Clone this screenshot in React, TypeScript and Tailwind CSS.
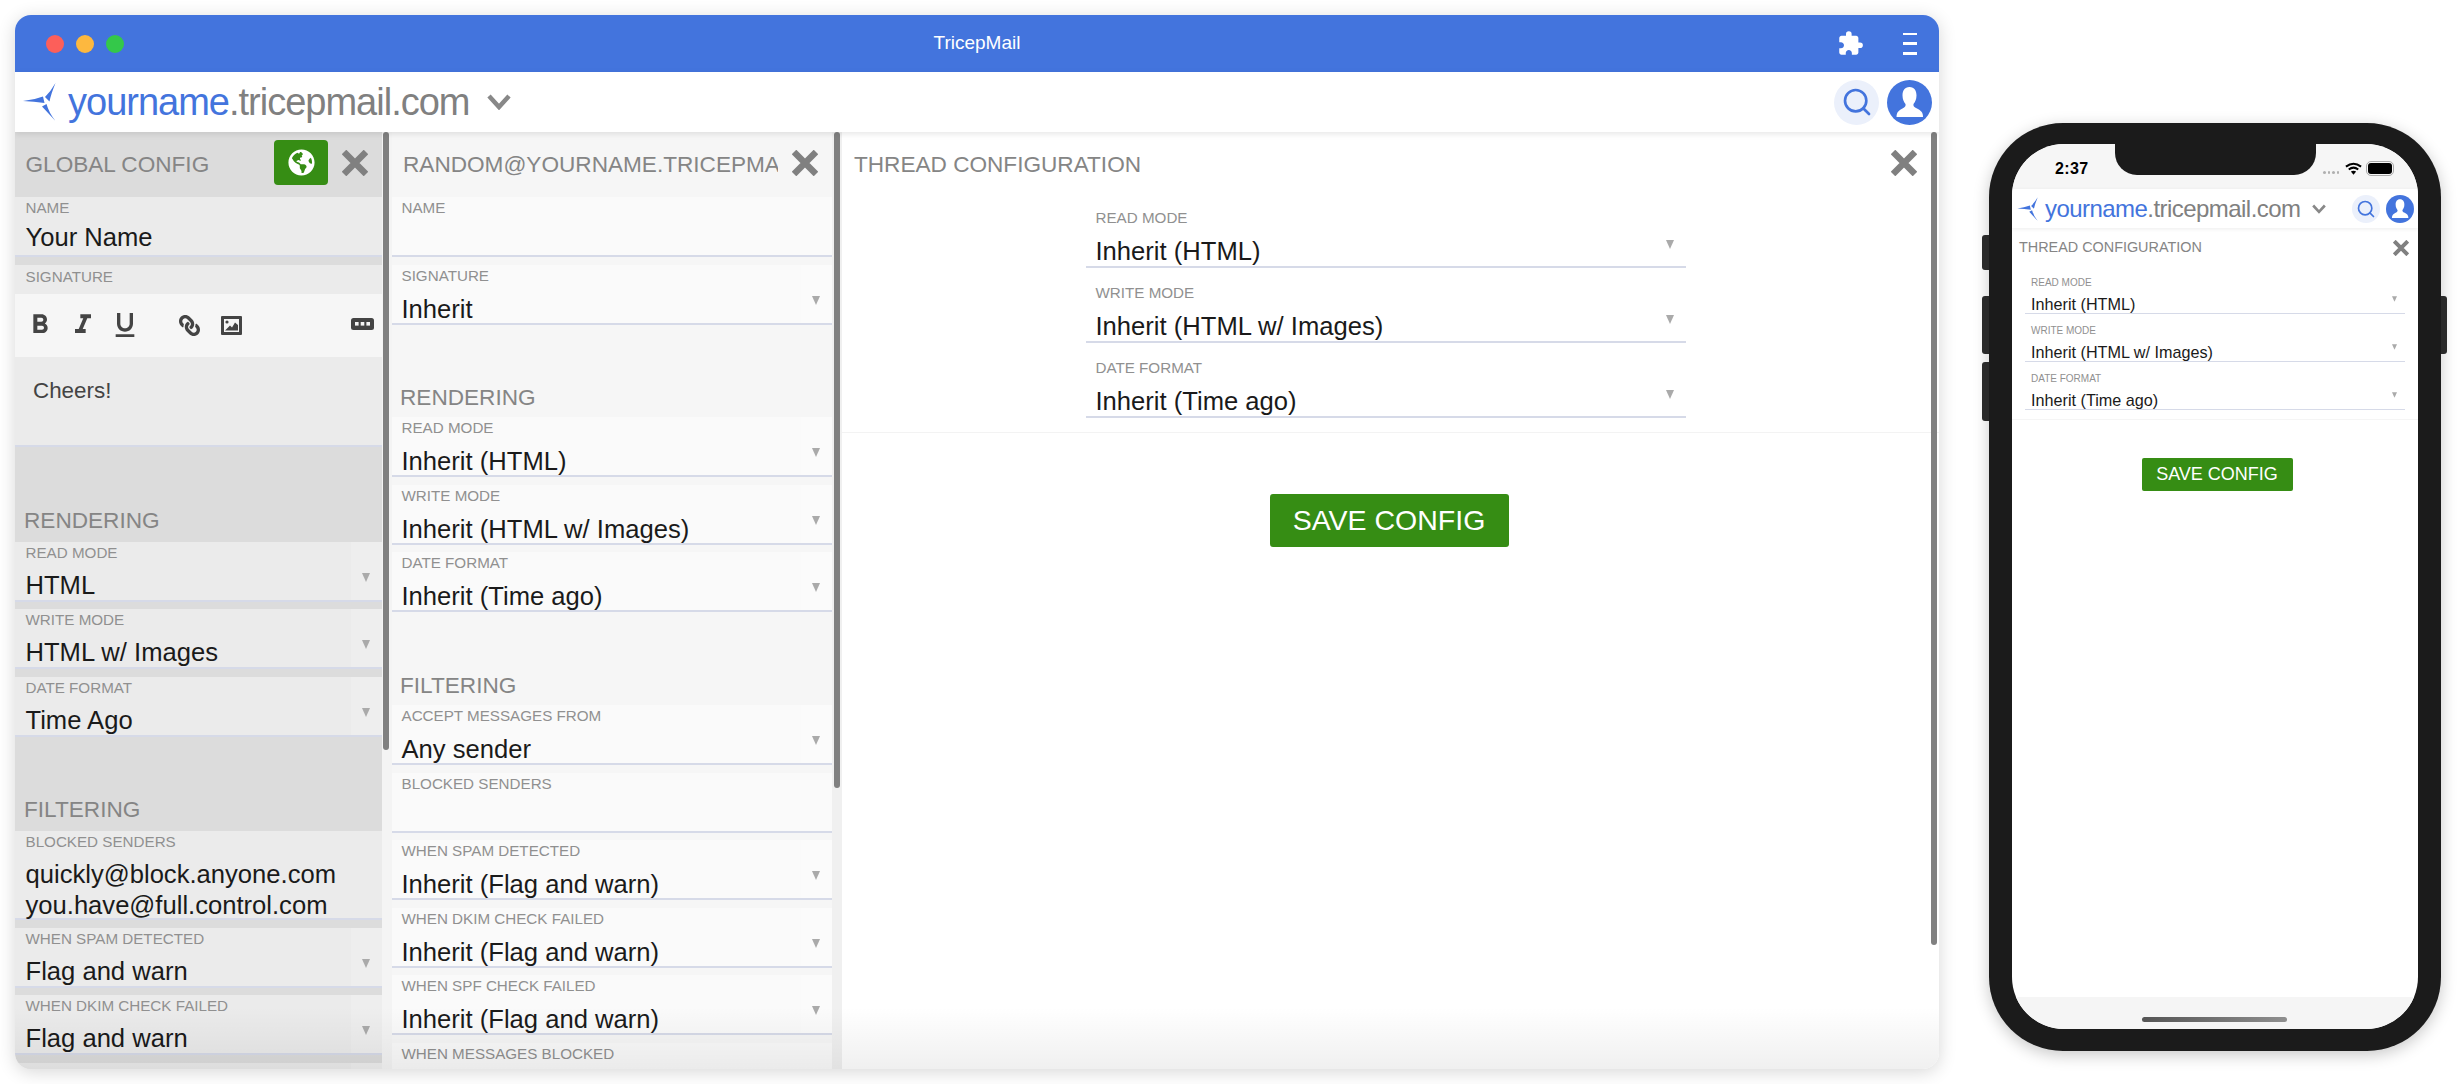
import { FaGlobeAmericas, FaLink } from 'react-icons/fa';
import { MdExtension, MdFormatBold, MdFormatItalic, MdFormatUnderlined } from 'react-icons/md';
import { Search } from 'lucide-react';

const font = "font-['Liberation_Sans',Arial,sans-serif]";

const Logo = ({ className }: { className: string }) => (
  <svg viewBox="0 0 44 48" className={className} fill="#4374dd">
    <path d="M5 23 Q16 22 25 18.5 L26.5 25 Q16 23.5 5 23 Z" />
    <path d="M37.5 5 Q33 16 31.5 23.5 L27 19 Q33 13 37.5 5 Z" />
    <path d="M37.5 43 L24 28.5 L28.5 26 Q31 35 37.5 43 Z" />
  </svg>
);

const CloseIcon = ({ className }: { className: string }) => (
  <svg viewBox="0 0 26 26" className={className} stroke="#808080" strokeWidth="6.5" fill="none">
    <path d="M2 2 L24 24 M24 2 L2 24" />
  </svg>
);

const Chevron = ({ className }: { className: string }) => (
  <svg viewBox="0 0 24 16" className={className} stroke="#888888" strokeWidth="4.5" fill="none">
    <path d="M2 2 L12 13 L22 2" />
  </svg>
);

const Avatar = ({ className }: { className: string }) => (
  <svg viewBox="0 0 45 45" className={className}>
    <circle cx="22.5" cy="22.5" r="22.5" fill="#4374dd" />
    <path
      d="M22.5 7 C27.5 7 29.5 11 29.5 15.5 C29.5 19.5 28 22 26.5 24 C26 26 27 27 30 28.5 C34 30.5 36 32.5 36 37 L9.5 37 C9.5 32.5 11.5 30.5 15.5 28.5 C18 27 19 26 18.5 24 C17 22 15.5 19.5 15.5 15.5 C15.5 11 17.5 7 22.5 7 Z"
      fill="#ffffff"
    />
  </svg>
);

const Arrow = ({ className }: { className: string }) => (
  <svg viewBox="0 0 8 9" className={className} fill="#aaaaaa">
    <path d="M0 0 H8 L4 9 Z" />
  </svg>
);

const Scrollbar = ({ className }: { className: string }) => (
  <div className={`absolute top-0 w-[6px] rounded-[3px] bg-[#808080] ${className}`} />
);

interface FieldProps {
  label: string;
  value?: string;
  select?: boolean;
  tone: string;
  arrowTone: string;
  pad: string;
  valueGap: string;
}

const Field = ({ label, value, select, tone, arrowTone, pad, valueGap }: FieldProps) => (
  <div className={`relative mb-[7.5px] h-[60px] border-b-2 border-[#d6dae8] ${tone}`}>
    {select && <div className={`absolute top-0 right-0 bottom-0 w-[31px] ${arrowTone}`} />}
    <div className={`relative pt-[2px] text-[15.2px] leading-[18px] text-[#909090] uppercase ${pad}`}>{label}</div>
    <div className={`relative text-[25.6px] leading-[29px] text-[#1a1a1a] ${pad} ${select ? valueGap : 'mt-[6px]'}`}>{value}</div>
    {select && <Arrow className="absolute top-[31px] right-[12.5px] h-[9px] w-[8px]" />}
  </div>
);

const GroupTitle = ({ title, className }: { title: string; className: string }) => (
  <div className={`flex items-end text-[22.6px] leading-[28px] text-[#858585] ${className}`}>{title}</div>
);

const darkField = { tone: 'bg-[#ebebeb]', arrowTone: 'bg-[#eeeeee]', pad: 'pl-[10.5px]', valueGap: 'mt-[9px]' };
const lightField = { tone: 'bg-[#fafafa]', arrowTone: 'bg-[#fbfbfb]', pad: 'pl-[9.5px]', valueGap: 'mt-[10px]' };

const SignatureEditor = () => (
  <div>
    <div className="h-[29px] bg-[#ebebeb] pl-[10.5px] pt-[3px] text-[15.2px] leading-[18px] text-[#909090]">SIGNATURE</div>
    <div className="relative flex h-[63px] items-center bg-[#f6f6f6] text-[#444444]">
      <MdFormatBold className="ml-[9px] h-[32px] w-[32px]" />
      <MdFormatItalic className="ml-[10.5px] h-[32px] w-[32px]" />
      <MdFormatUnderlined className="ml-[10px] h-[32px] w-[32px]" />
      <FaLink className="ml-[38.5px] h-[21px] w-[21px] -scale-x-100" />
      <svg viewBox="0 0 21 19" className="ml-[21px] h-[19px] w-[21px]">
        <path fillRule="evenodd" fill="#444444" d="M1 0 H20 Q21 0 21 1 V18 Q21 19 20 19 H1 Q0 19 0 18 V1 Q0 0 1 0 Z M3 3 V16 H18 V3 Z" />
        <circle cx="6" cy="6" r="1.6" fill="#444444" />
        <path fill="#444444" d="M4 14.5 L9 9.5 L11 11.5 L14 6.5 L17 9 V14.5 Z" />
      </svg>
      <svg viewBox="0 0 23 12" className="absolute top-[24px] right-[8px] h-[12px] w-[23px]">
        <rect width="23" height="12" rx="2.5" fill="#444444" />
        <rect x="4" y="4" width="3.6" height="3.6" fill="#f6f6f6" />
        <rect x="9.7" y="4" width="3.6" height="3.6" fill="#f6f6f6" />
        <rect x="15.4" y="4" width="3.6" height="3.6" fill="#f6f6f6" />
      </svg>
    </div>
    <div className="h-[90px] border-b-2 border-[#d6dae8] bg-[#ebebeb] pl-[18px] pt-[20px] text-[22.4px] leading-[28px] text-[#444444]">Cheers!</div>
  </div>
);

const GlobalPanel = () => (
  <div className="relative h-full w-[377px] shrink-0 overflow-hidden bg-[#f4f4f4]">
    <div className="h-full w-[367px] bg-[#dcdcdc]">
      <div className="flex h-[65px] items-center pl-[10.5px] pr-[14px]">
        <span className="flex-1 text-[22.6px] text-[#858585]">GLOBAL CONFIG</span>
        <button className="mr-[14px] flex h-[45px] w-[54px] -translate-y-[2px] items-center justify-center rounded-[4px] bg-[#368d14]">
          <FaGlobeAmericas className="h-[27px] w-[27px] text-white" />
        </button>
        <CloseIcon className="h-[26px] w-[26px] -translate-y-[2px]" />
      </div>
      <Field label="Name" value="Your Name" {...darkField} />
      <SignatureEditor />
      <GroupTitle title="RENDERING" className="h-[95px] pb-[7px] pl-[9px]" />
      <Field label="Read Mode" value="HTML" select {...darkField} />
      <Field label="Write Mode" value="HTML w/ Images" select {...darkField} />
      <div className="-mb-[7.5px]">
        <Field label="Date Format" value="Time Ago" select {...darkField} />
      </div>
      <GroupTitle title="FILTERING" className="h-[94px] pb-[7px] pl-[9px]" />
      <div className="mb-[8px] h-[89px] border-b-2 border-[#d6dae8] bg-[#ebebeb] pl-[10.5px] pt-[2px] text-[#1a1a1a]">
        <div className="text-[15.2px] leading-[18px] text-[#909090]">BLOCKED SENDERS</div>
        <div className="mt-[8px] text-[25.6px] leading-[31px]">quickly@block.anyone.com</div>
        <div className="text-[25.6px] leading-[31px]">you.have@full.control.com</div>
      </div>
      <Field label="When Spam Detected" value="Flag and warn" select {...darkField} />
      <Field label="When DKIM Check Failed" value="Flag and warn" select {...darkField} />
      <Field label="When SPF Check Failed" value="Flag and warn" select {...darkField} />
    </div>
    <Scrollbar className="left-[368px] h-[618px]" />
  </div>
);

const AccountPanel = () => (
  <div className="relative h-full w-[450px] shrink-0 overflow-hidden bg-[#f0f0f0]">
    <div className="h-full w-[440px] bg-[#f6f6f6]">
      <div className="flex h-[65px] items-center pl-[11px]">
        <span className="w-[375px] overflow-hidden whitespace-nowrap text-[22.6px] text-[#858585]">RANDOM@YOURNAME.TRICEPMAIL.COM</span>
        <CloseIcon className="ml-[14px] h-[26px] w-[26px] -translate-y-[2px]" />
      </div>
      <Field label="Name" {...lightField} />
      <Field label="Signature" value="Inherit" select {...lightField} />
      <GroupTitle title="RENDERING" className="h-[85px] pb-[5px] pl-[8px]" />
      <Field label="Read Mode" value="Inherit (HTML)" select {...lightField} />
      <Field label="Write Mode" value="Inherit (HTML w/ Images)" select {...lightField} />
      <div className="-mb-[7.5px]">
        <Field label="Date Format" value="Inherit (Time ago)" select {...lightField} />
      </div>
      <GroupTitle title="FILTERING" className="h-[93px] pb-[5px] pl-[8px]" />
      <Field label="Accept Messages From" value="Any sender" select {...lightField} />
      <Field label="Blocked Senders" {...lightField} />
      <Field label="When Spam Detected" value="Inherit (Flag and warn)" select {...lightField} />
      <Field label="When DKIM Check Failed" value="Inherit (Flag and warn)" select {...lightField} />
      <Field label="When SPF Check Failed" value="Inherit (Flag and warn)" select {...lightField} />
      <Field label="When Messages Blocked" {...lightField} />
    </div>
    <Scrollbar className="left-[442px] h-[656px]" />
  </div>
);

const threadFields = [
  { label: 'READ MODE', value: 'Inherit (HTML)' },
  { label: 'WRITE MODE', value: 'Inherit (HTML w/ Images)' },
  { label: 'DATE FORMAT', value: 'Inherit (Time ago)' },
];

const ThreadPanel = () => (
  <div className="relative h-full flex-1 overflow-hidden bg-white">
    <div className="flex h-[65px] items-center justify-between pl-[12px] pr-[22px]">
      <span className="text-[22.6px] text-[#858585]">THREAD CONFIGURATION</span>
      <CloseIcon className="h-[26px] w-[26px] -translate-y-[2px]" />
    </div>
    <div className="flex h-[236px] flex-col items-center border-b border-[#f3f3f3] pt-[11px] pr-[10px]">
      {threadFields.map(f => (
        <div key={f.label} className="relative mb-[15px] h-[60px] w-[600px] border-b-2 border-[#d6dae8]">
          <div className="pl-[10px] pt-[1px] text-[15.2px] leading-[18px] text-[#909090]">{f.label}</div>
          <div className="mt-[10px] pl-[10px] text-[25.6px] leading-[29px] text-[#1a1a1a]">{f.value}</div>
          <Arrow className="absolute top-[32px] right-[12px] h-[9px] w-[8px]" />
        </div>
      ))}
    </div>
    <div className="flex justify-center pt-[61px] pr-[3px]">
      <button className="flex h-[53px] w-[239px] items-center justify-center rounded-[3px] bg-[#368d14] text-[28.5px] text-white">SAVE CONFIG</button>
    </div>
    <Scrollbar className="left-[1089px] h-[813px]" />
  </div>
);

const DesktopWindow = () => (
  <div className="relative mt-[15px] ml-[15px] flex h-[1054px] w-[1924px] shrink-0 flex-col overflow-hidden rounded-[16px] bg-white shadow-[0_3px_18px_rgba(0,0,0,0.16)]">
    <div className="relative flex h-[57px] shrink-0 items-center bg-[#4374dd] pl-[31px]">
      <div className="h-[18px] w-[18px] rounded-full bg-[#fc5f5a]" />
      <div className="ml-[12px] h-[18px] w-[18px] rounded-full bg-[#fdb83f]" />
      <div className="ml-[12px] h-[18px] w-[18px] rounded-full bg-[#34c84a]" />
      <span className="absolute left-0 right-0 text-center text-[19px] text-white">TricepMail</span>
      <MdExtension className="absolute right-[75px] h-[27px] w-[27px] text-white" />
      <div className="absolute right-[22px] flex h-[22px] w-[14px] flex-col justify-between">
        <div className="h-[2.5px] bg-white" />
        <div className="h-[2.5px] bg-white" />
        <div className="h-[2.5px] bg-white" />
      </div>
    </div>
    <div className="relative z-10 flex h-[60px] shrink-0 items-center bg-white pl-[3px] pr-[7px] shadow-[0_2px_6px_rgba(0,0,0,0.1)]">
      <Logo className="h-[48px] w-[44px]" />
      <span className="ml-[6px] text-[38px] leading-[46px] tracking-[-1px] text-[#808080]">
        <span className="text-[#4374dd]">yourname</span>.tricepmail.com
      </span>
      <Chevron className="ml-[18px] h-[16px] w-[24px]" />
      <div className="ml-auto flex h-[45px] w-[45px] items-center justify-center rounded-full bg-[#ebf0fb]">
        <Search className="h-[32px] w-[32px] text-[#4374dd]" strokeWidth={2} />
      </div>
      <Avatar className="ml-[8px] h-[45px] w-[45px]" />
    </div>
    <div className="flex min-h-0 flex-1">
      <GlobalPanel />
      <AccountPanel />
      <ThreadPanel />
    </div>
    <div className="absolute right-0 bottom-0 left-0 z-20 h-[62px] bg-gradient-to-b from-transparent to-black/[0.06]" />
  </div>
);

const Phone = () => (
  <div className="relative mt-[123px] ml-[50px] flex h-[928px] w-[452px] shrink-0 flex-col rounded-[74px] bg-[#1b1b1b] shadow-[0_4px_16px_rgba(0,0,0,0.22)]">
    <div className="absolute top-[112px] -left-[7px] h-[35px] w-[7px] rounded-l-[3px] bg-[#2a2a2a]" />
    <div className="absolute top-[173px] -left-[7px] h-[58px] w-[7px] rounded-l-[3px] bg-[#2a2a2a]" />
    <div className="absolute top-[239px] -left-[7px] h-[59px] w-[7px] rounded-l-[3px] bg-[#2a2a2a]" />
    <div className="absolute top-[173px] -right-[6px] h-[58px] w-[6px] rounded-r-[3px] bg-[#2a2a2a]" />
    <div className="relative mx-[23px] mt-[21px] flex h-[885px] flex-col overflow-hidden rounded-[52px] bg-white">
      <div className="absolute top-0 left-[103px] z-10 h-[31px] w-[201px] rounded-b-[22px] bg-[#1b1b1b]" />
      <div className="relative flex h-[45px] shrink-0 items-center bg-[#f6f6f6] pt-[4px] pl-[43px] pr-[26px] text-black">
        <span className="text-[16px] font-bold tracking-[0.4px]">2:37</span>
        <div className="ml-auto flex items-center">
          <div className="mt-[8px] flex gap-[2px]">
            <div className="h-[2.5px] w-[2.5px] rounded-full bg-[#b0b0b0]" />
            <div className="h-[2.5px] w-[2.5px] rounded-full bg-[#b0b0b0]" />
            <div className="h-[2.5px] w-[2.5px] rounded-full bg-[#b0b0b0]" />
            <div className="h-[2.5px] w-[2.5px] rounded-full bg-[#b0b0b0]" />
          </div>
          <svg viewBox="0 0 18 13" className="ml-[6px] h-[13px] w-[17px]" fill="none" stroke="#000000" strokeWidth="2.2">
            <path d="M1 4.5 Q9 -1.5 17 4.5 M4 7.5 Q9 3.5 14 7.5" />
            <path d="M9 13 L6.2 9.8 Q9 8 11.8 9.8 Z" fill="#000000" stroke="none" />
          </svg>
          <div className="ml-[6px] h-[11px] w-[24px] rounded-[3px] bg-black outline outline-1 outline-offset-1 outline-[#aaaaaa]" />
        </div>
      </div>
      <div className="z-[5] flex h-[39px] shrink-0 items-center bg-white pl-[2px] pr-[4px] shadow-[0_1px_4px_rgba(0,0,0,0.08)]">
        <Logo className="h-[30px] w-[28px]" />
        <span className="ml-[3px] text-[24px] leading-[30px] tracking-[-0.55px] text-[#808080]">
          <span className="text-[#4374dd]">yourname</span>.tricepmail.com
        </span>
        <Chevron className="ml-[12px] h-[10px] w-[14px]" />
        <div className="ml-auto flex h-[28px] w-[28px] items-center justify-center rounded-full bg-[#ebf0fb]">
          <Search className="h-[20px] w-[20px] text-[#4374dd]" strokeWidth={2} />
        </div>
        <Avatar className="ml-[6px] h-[28px] w-[28px]" />
      </div>
      <div className="flex h-[38px] shrink-0 items-center justify-between pt-[1px] pl-[7px] pr-[9px]">
        <span className="text-[14.4px] text-[#858585]">THREAD CONFIGURATION</span>
        <CloseIcon className="h-[16px] w-[16px]" />
      </div>
      <div className="flex flex-col border-b border-[#f5f5f5] px-[13px] pt-[10.5px] pb-[9px]">
        {threadFields.map(f => (
          <div key={f.label} className="relative mb-[11px] h-[37px] border-b border-[#d6dae8] last:mb-0">
            <div className="pl-[6px] text-[10px] leading-[12px] text-[#909090]">{f.label}</div>
            <div className="mt-[5px] pl-[6px] text-[16.2px] leading-[20px] text-[#1a1a1a]">{f.value}</div>
            <Arrow className="absolute top-[19px] right-[8.5px] h-[6px] w-[5px]" />
          </div>
        ))}
      </div>
      <div className="flex justify-center pt-[38px] pl-[4px]">
        <button className="flex h-[33px] w-[151px] items-center justify-center rounded-[2px] bg-[#368d14] text-[18px] text-white">SAVE CONFIG</button>
      </div>
      <div className="mt-auto flex h-[32px] shrink-0 items-start justify-center bg-[#f5f5f5] pt-[20px] pr-[2px]">
        <div className="h-[5px] w-[145px] rounded-full bg-gradient-to-r from-[#555555] to-[#8f8f8f]" />
      </div>
    </div>
  </div>
);

export default function App() {
  return (
    <div className={`flex h-[1084px] w-[2462px] overflow-hidden bg-white ${font}`}>
      <DesktopWindow />
      <Phone />
    </div>
  );
}
